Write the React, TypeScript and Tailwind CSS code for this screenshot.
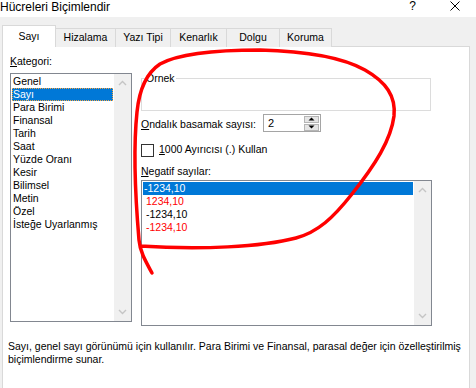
import { Fragment } from 'react';

const categories = [
  'Genel',
  'Sayı',
  'Para Birimi',
  'Finansal',
  'Tarih',
  'Saat',
  'Yüzde Oranı',
  'Kesir',
  'Bilimsel',
  'Metin',
  'Özel',
  'İsteğe Uyarlanmış',
];

const negatives = [
  { text: '-1234,10', red: false, selected: true },
  { text: '1234,10', red: true, selected: false },
  { text: '-1234,10', red: false, selected: false },
  { text: '-1234,10', red: true, selected: false },
];

const tabs = [
  { label: 'Sayı', width: 'w-[54px]' },
  { label: 'Hizalama', width: 'w-[59px]' },
  { label: 'Yazı Tipi', width: 'w-[55px]' },
  { label: 'Kenarlık', width: 'w-[56px]' },
  { label: 'Dolgu', width: 'w-[53px]' },
  { label: 'Koruma', width: 'w-[53px]' },
];

function Scrollbar() {
  return (
    <div className="w-[17px] shrink-0 bg-[#f0f0f0] flex flex-col justify-between items-center pt-[6px] pb-[6px]">
      <svg width="9" height="6" viewBox="0 0 9 6">
        <path d="M1 5 L4.5 1.5 L8 5" stroke="#c5c5c5" strokeWidth="1.4" fill="none" />
      </svg>
      <svg width="9" height="6" viewBox="0 0 9 6">
        <path d="M1 1 L4.5 4.5 L8 1" stroke="#c5c5c5" strokeWidth="1.4" fill="none" />
      </svg>
    </div>
  );
}

function SpinBox() {
  return (
    <div className="w-[58px] h-[18px] border border-[#a5a5a5] bg-white flex items-center justify-between pl-[4px] pr-[1px]">
      <span className="text-[11px] leading-none">2</span>
      <div className="flex flex-col gap-[1px]">
        <div className="w-[15px] h-[7px] bg-[#e5e5e5] border border-[#b5b5b5] flex items-center justify-center">
          <svg width="7" height="4" viewBox="0 0 7 4">
            <path d="M0.5 3.5 L3.5 0.5 L6.5 3.5 Z" fill="#000" />
          </svg>
        </div>
        <div className="w-[15px] h-[7px] bg-[#e5e5e5] border border-[#b5b5b5] flex items-center justify-center">
          <svg width="7" height="4" viewBox="0 0 7 4">
            <path d="M0.5 0.5 L3.5 3.5 L6.5 0.5 Z" fill="#000" />
          </svg>
        </div>
      </div>
    </div>
  );
}

export default function App() {
  return (
    <div className="relative w-[476px] h-[388px] overflow-hidden bg-[#f0f0f0] text-black font-['Liberation_Sans',Arial,sans-serif] text-[10.5px]">
      {/* Title bar */}
      <div className="h-[17px] bg-white flex items-start justify-between">
        <span className="text-[12px] leading-[14px]">Hücreleri Biçimlendir</span>
        <div className="flex items-start gap-[34px] pr-[16px]">
          <span className="text-[12px] leading-[13px]">?</span>
          <svg width="10" height="10" viewBox="0 0 10 10" className="mt-[1px]">
            <path d="M0.5 0.5 L9.5 9.5 M9.5 0.5 L0.5 9.5" stroke="#000" strokeWidth="1" />
          </svg>
        </div>
      </div>

      {/* Tabs */}
      <div className="relative z-10 flex items-end pl-[2px] mt-[8px] -mb-px h-[22px]">
        {tabs.map((t, i) =>
          i === 0 ? (
            <div
              key={t.label}
              className={`${t.width} h-[22px] bg-white border-t border-l border-r border-[#d9d9d9] flex items-center justify-center pt-[1px]`}
            >
              {t.label}
            </div>
          ) : (
            <div
              key={t.label}
              className={`${t.width} h-[19px] bg-[#f0f0f0] border-t border-[#d9d9d9] flex items-center justify-center ${i === tabs.length - 1 ? 'border-r' : ''} ${i > 1 ? 'border-l' : ''}`}
            >
              {t.label}
            </div>
          )
        )}
      </div>

      {/* Panel */}
      <div className="ml-[2px] w-[468px] h-[400px] bg-white border border-[#d9d9d9]">
        <div className="flex pt-[8px] pl-[7px]">
          {/* Left column */}
          <div className="flex flex-col w-[122px]">
            <div className="h-[13px] leading-[13px]">
              <span className="underline">K</span>ategori:
            </div>
            <div className="mt-[5px] h-[249px] border border-[#828790] flex">
              <div className="flex-1 p-[1px]">
                {categories.map((c) =>
                  c === 'Sayı' ? (
                    <div
                      key={c}
                      className="h-[13px] leading-[13px] pl-[1px] bg-[#0078d7] text-white outline outline-1 outline-dotted outline-[#f5a442] -outline-offset-1"
                    >
                      {c}
                    </div>
                  ) : (
                    <div key={c} className="h-[13px] leading-[13px] pl-[1px]">
                      {c}
                    </div>
                  )
                )}
              </div>
              <Scrollbar />
            </div>
          </div>

          {/* Right column */}
          <div className="flex flex-col ml-[9px] w-[291px] pt-[17px]">
            <fieldset className="w-[290px] h-[39px] border border-[#dcdcdc] pl-[4px]">
              <legend className="leading-[13px] pr-[1px]">Örnek</legend>
            </fieldset>

            <div className="mt-[3px] flex items-center">
              <span className="w-[122px] mt-[3px]">
                <span className="underline">O</span>ndalık basamak sayısı:
              </span>
              <SpinBox />
            </div>

            <div className="mt-[11px] flex items-center h-[13px]">
              <div className="w-[13px] h-[13px] border border-[#333333] bg-white" />
              <span className="ml-[5px]">
                <span className="underline">1</span>000 Ayırıcısı (.) Kullan
              </span>
            </div>

            <div className="mt-[8px] h-[13px] leading-[13px]">
              <span className="underline">N</span>egatif sayılar:
            </div>
            <div className="mt-[2px] h-[146px] border border-[#828790] flex">
              <div className="flex-1 p-[1px]">
                {negatives.map((n, i) => (
                  <Fragment key={i}>
                    {n.selected ? (
                      <div className="h-[13px] leading-[13px] pl-[1px] bg-[#0078d7] text-white">{n.text}</div>
                    ) : (
                      <div className={`h-[13px] leading-[13px] pl-[3px] ${n.red ? 'text-[#ff0000]' : ''}`}>{n.text}</div>
                    )}
                  </Fragment>
                ))}
              </div>
              <Scrollbar />
            </div>
          </div>
        </div>

        <p className="mt-[14px] pl-[5px] leading-[13px] whitespace-nowrap">
          Sayı, genel sayı görünümü için kullanılır. Para Birimi ve Finansal, parasal değer için özelleştirilmiş
          <br />
          biçimlendirme sunar.
        </p>
      </div>

      {/* Red hand-drawn annotation */}
      <svg className="absolute inset-0 pointer-events-none" width="476" height="388" viewBox="0 0 476 388">
        <path
          d="M152 273 C146 262 140 252 139 240 C136 205 133 150 137 112 C139 92 145 74 160 64 C180 53 220 50 260 50 C300 51 340 56 365 70 C386 82 396 96 394 116 C391 140 375 165 352 194 C333 218 318 232 296 238 C262 247 200 250 140 246"
          stroke="#ff0000"
          strokeWidth="3.5"
          fill="none"
          strokeLinecap="round"
          strokeLinejoin="round"
        />
      </svg>
    </div>
  );
}
